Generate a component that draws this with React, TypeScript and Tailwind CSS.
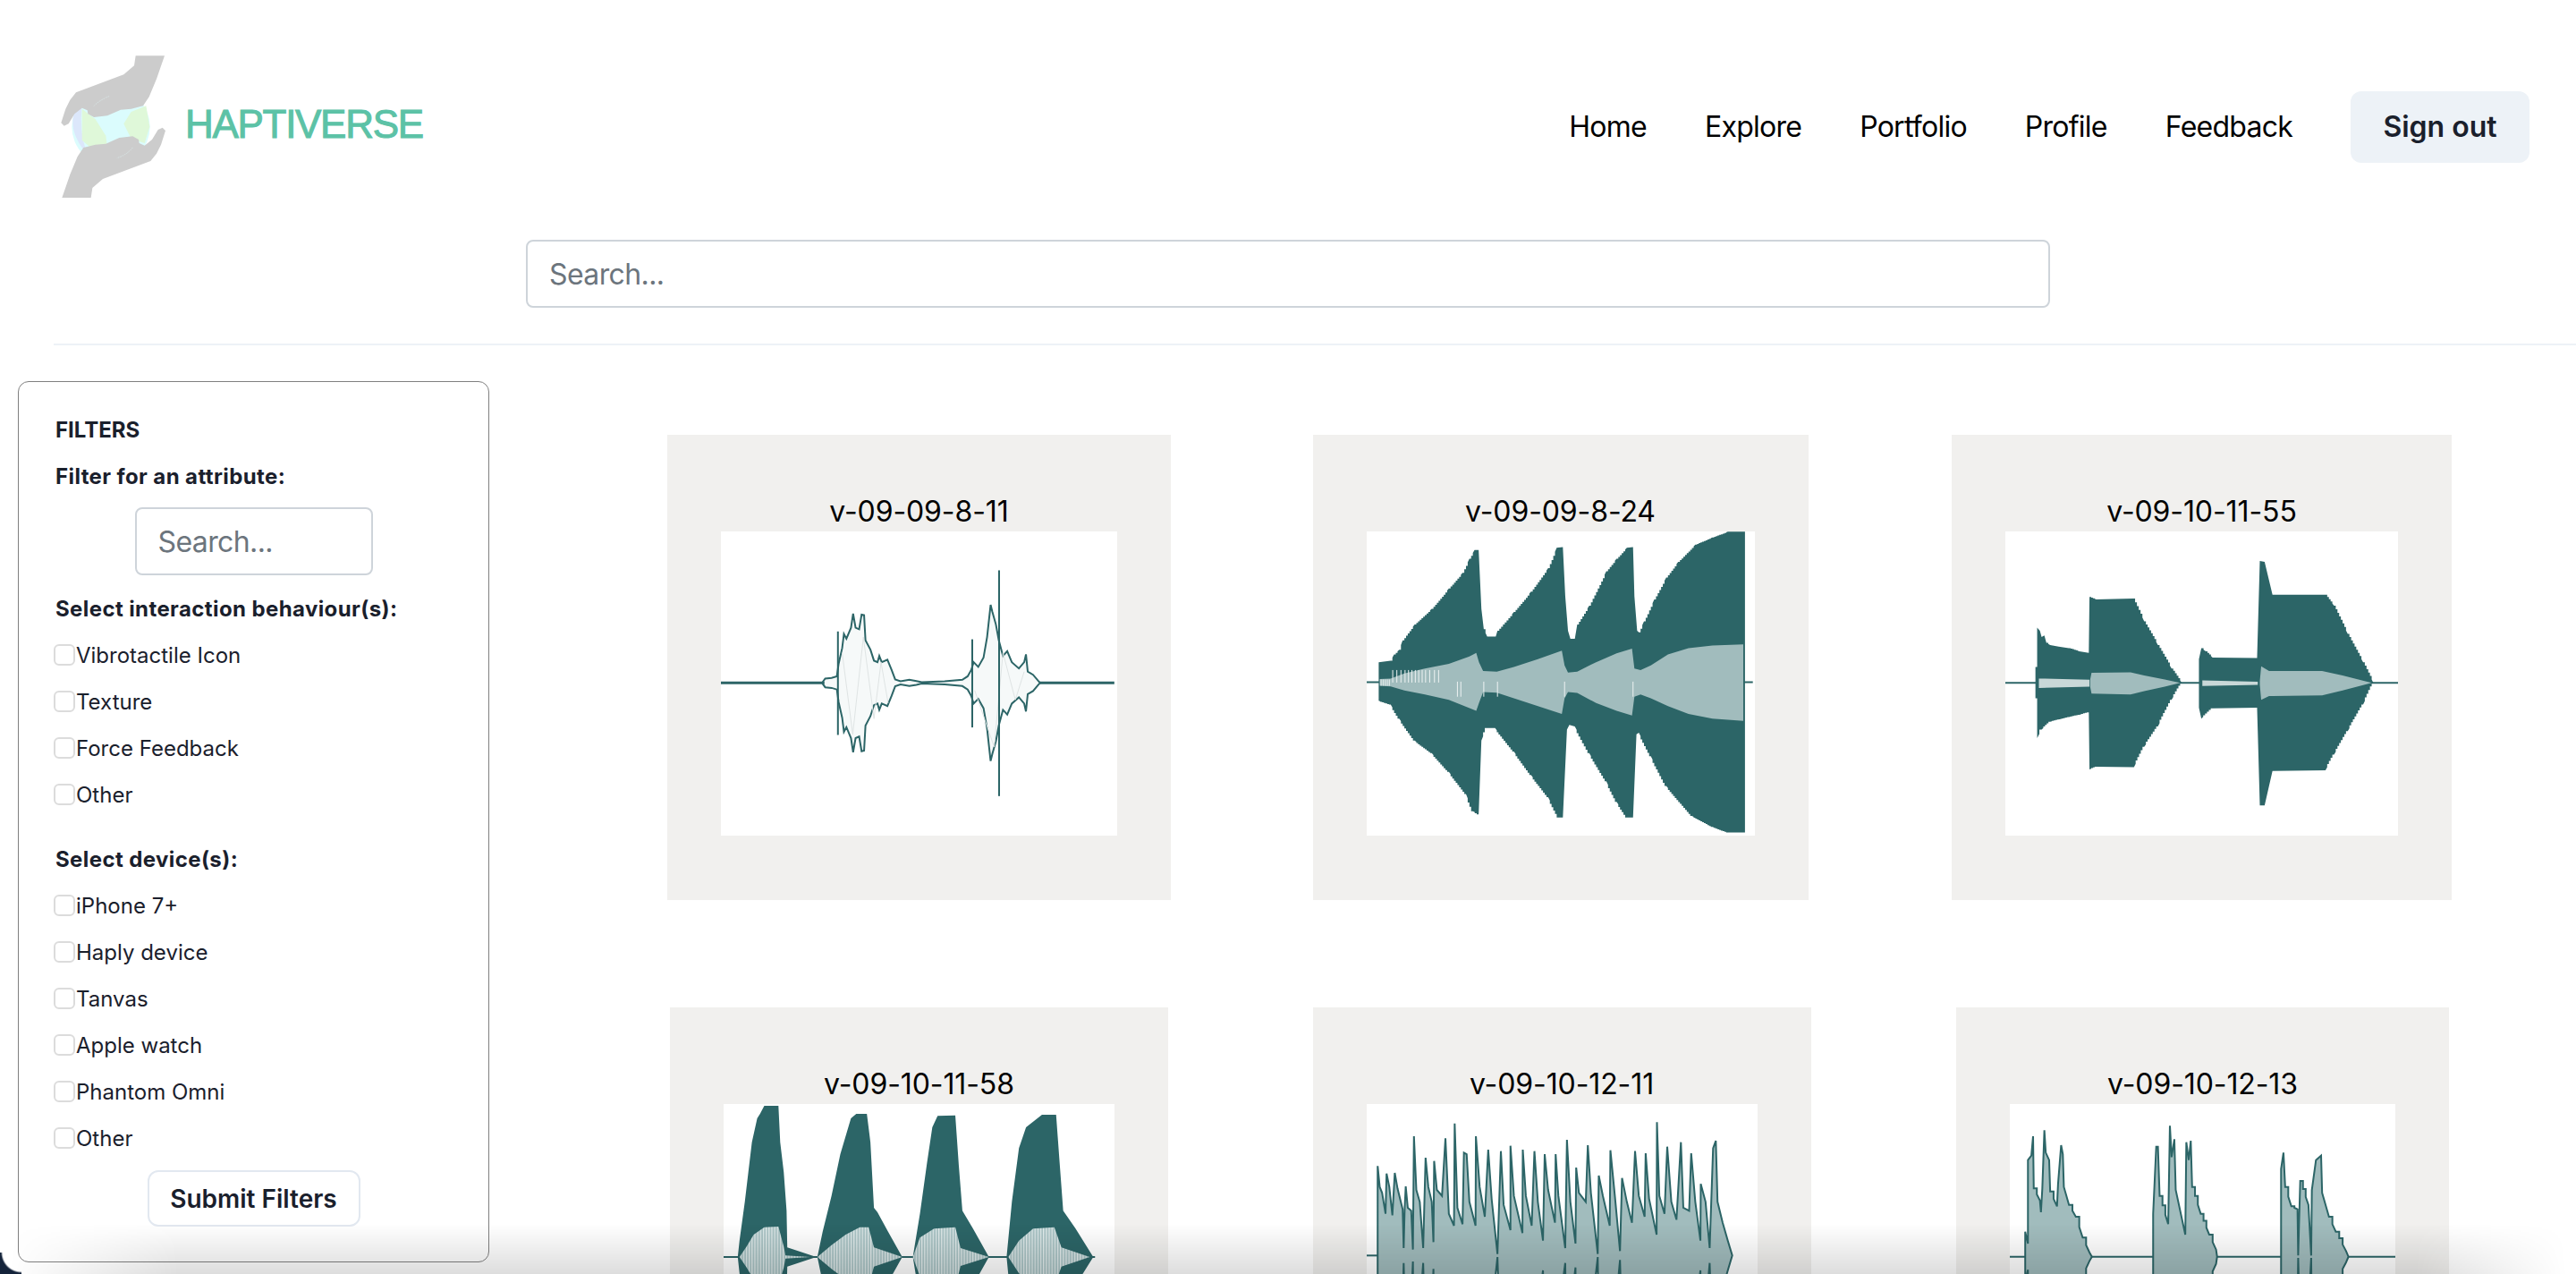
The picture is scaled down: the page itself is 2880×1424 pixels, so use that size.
import React from "react";

const DARK = "#2c6567";
const LIGHT = "#a1bcbd";

type P = [number, number];
const pts = (a: P[]) => a.map((p) => p.join(",")).join(" ");
const mirror = (top: P[], axis: number): P[] => [
  ...top,
  ...[...top].reverse().map(([x, y]) => [x, 2 * axis - y] as P),
];
const stairs = (a: P[], step = 5): P[] => {
  const out: P[] = [];
  a.forEach((p, i) => {
    const q = a[(i + 1) % a.length];
    out.push(p);
    const dx = q[0] - p[0];
    const dy = q[1] - p[1];
    const n = Math.floor(Math.abs(dx) / step);
    if (n > 1 && Math.abs(dy) > step && Math.abs(dy) / Math.abs(dx) < 4) {
      for (let k = 1; k < n; k++) {
        const x = p[0] + (dx * k) / n;
        out.push([x, p[1] + (dy * (k - 1)) / n]);
        out.push([x, p[1] + (dy * k) / n]);
      }
    }
  });
  return out;
};

const NS = { vectorEffect: "non-scaling-stroke" as const };

function Frame({ vb, w, children }: { vb: string; w: number; children: React.ReactNode }) {
  return (
    <div className="bg-white h-[340px] shrink-0 mt-[1px]" style={{ width: w }}>
      <svg viewBox={vb} preserveAspectRatio="none" className="block w-full h-full">
        {children}
      </svg>
    </div>
  );
}

function Wave1() {
  const a: P[] = [[505, 833], [512, 822], [530, 820], [545, 815], [550, 775], [560, 725], [565, 680], [572, 695], [585, 660], [591, 615], [598, 660], [608, 665], [615, 618], [622, 620], [626, 700], [640, 730], [650, 765], [660, 770], [665, 750], [672, 770], [688, 762], [700, 795], [710, 825], [725, 831], [750, 826], [770, 830], [785, 834], [850, 831], [900, 826], [915, 815], [925, 795], [932, 770], [945, 785], [960, 755], [970, 690], [980, 587], [985, 610], [995, 650], [1003, 700], [1015, 750], [1027, 735], [1040, 770], [1060, 790], [1075, 770], [1080, 745], [1085, 800], [1100, 810], [1115, 830], [1120, 836]];
  return (
    <Frame vb="217 353 1121 970" w={443}>
      <polygon points={pts(mirror(a, 836))} fill="#f6f9f9" stroke={DARK} strokeWidth={2} {...NS} />
      <polyline points="560,740 590,1000 620,690 650,950 670,770 690,900" fill="none" stroke="#dfe4e4" strokeWidth={1} {...NS} />
      <polyline points="935,860 990,1040 1015,740 1050,890 1075,800" fill="none" stroke="#dfe4e4" strokeWidth={1} {...NS} />
      <line x1="217" y1="836" x2="510" y2="836" stroke={DARK} strokeWidth={3} {...NS} />
      <line x1="1118" y1="836" x2="1330" y2="836" stroke={DARK} strokeWidth={3} {...NS} />
      <line x1="548" y1="672" x2="548" y2="1002" stroke={DARK} strokeWidth={2} {...NS} />
      <line x1="928" y1="697" x2="928" y2="978" stroke={DARK} strokeWidth={2} {...NS} />
      <line x1="1004" y1="477" x2="1004" y2="1197" stroke={DARK} strokeWidth={2} {...NS} />
    </Frame>
  );
}

function Wave2() {
  const outer: P[] = [[265, 770], [300, 765], [310, 745], [325, 730], [335, 700], [370, 650], [420, 600], [470, 535], [510, 485], [530, 440], [545, 412], [557, 412], [565, 600], [572, 665], [582, 688], [607, 688], [612, 670], [660, 610], [710, 545], [760, 470], [785, 405], [803, 403], [810, 560], [818, 670], [825, 695], [838, 695], [845, 650], [880, 590], [930, 480], [960, 440], [990, 405], [1008, 403], [1012, 560], [1020, 670], [1025, 675], [1040, 640], [1070, 570], [1105, 500], [1140, 450], [1190, 395], [1240, 372], [1285, 354], [1335, 354], [1335, 1313], [1285, 1313], [1240, 1295], [1180, 1260], [1105, 1165], [1060, 1070], [1025, 995], [1018, 1000], [1008, 1265], [990, 1265], [960, 1215], [930, 1150], [880, 1060], [838, 975], [822, 970], [815, 985], [803, 1265], [790, 1265], [760, 1200], [710, 1130], [660, 1055], [605, 980], [580, 980], [565, 1020], [557, 1255], [540, 1245], [520, 1190], [470, 1120], [420, 1060], [370, 1020], [325, 950], [300, 905], [265, 893]];
  const inner: P[] = [[268, 824], [300, 822], [340, 806], [400, 790], [470, 775], [530, 752], [550, 740], [558, 770], [570, 798], [610, 800], [660, 785], [730, 760], [800, 733], [808, 780], [818, 803], [845, 800], [900, 770], [960, 742], [1005, 727], [1012, 790], [1030, 795], [1060, 780], [1110, 745], [1170, 725], [1240, 717], [1330, 713], [1330, 957], [1240, 950], [1170, 935], [1110, 910], [1060, 885], [1030, 873], [1012, 880], [1005, 940], [960, 925], [900, 900], [845, 868], [818, 865], [808, 885], [800, 935], [730, 910], [660, 885], [610, 867], [570, 865], [558, 900], [550, 925], [470, 890], [400, 873], [340, 860], [300, 847], [268, 845]];
  const ticks = [272, 278, 284, 290, 296, 306, 318, 330, 342, 352, 362, 372, 382, 392, 402, 414, 428, 440, 495, 505, 572, 612, 808, 1008];
  return (
    <Frame vb="230 353 1134 970" w={434}>
      <line x1="230" y1="834" x2="1358" y2="834" stroke={DARK} strokeWidth={2} {...NS} />
      <polygon points={pts(stairs(outer))} fill={DARK} />
      <polygon points={pts(inner)} fill={LIGHT} />
      {ticks.map((x) => (
        <line key={x} x1={x} x2={x} y1={x < 300 ? 825 : x < 445 ? 795 : 832} y2={x < 300 ? 845 : x < 445 ? 835 : 880} stroke="#eef3f3" strokeWidth={1} {...NS} />
      ))}
    </Frame>
  );
}

function Wave3() {
  const a: P[] = [[302, 785], [307, 785], [307, 660], [315, 670], [320, 690], [328, 685], [334, 708], [345, 715], [370, 720], [400, 725], [430, 735], [458, 740], [460, 562], [480, 570], [588, 567], [620, 640], [660, 715], [700, 790], [730, 836], [700, 890], [660, 975], [620, 1040], [590, 1105], [480, 1103], [460, 1112], [458, 930], [430, 938], [400, 945], [345, 960], [320, 985], [307, 1012], [307, 885], [302, 885]];
  const b: P[] = [[780, 836], [780, 760], [787, 725], [800, 735], [820, 755], [950, 757], [952, 680], [958, 447], [972, 450], [995, 555], [1150, 555], [1175, 590], [1215, 680], [1260, 770], [1290, 836], [1260, 905], [1215, 990], [1175, 1065], [1150, 1115], [995, 1117], [972, 1227], [958, 1227], [952, 990], [950, 915], [820, 917], [787, 950], [780, 915]];
  const c: P[] = [[466, 804], [580, 802], [620, 812], [680, 825], [725, 836], [680, 848], [620, 862], [580, 873], [466, 870], [462, 848], [462, 826]];
  const d: P[] = [[962, 783], [985, 798], [1140, 798], [1200, 812], [1285, 836], [1200, 860], [1140, 876], [985, 878], [962, 890], [958, 842], [958, 830]];
  return (
    <Frame vb="214 353 1148 970" w={439}>
      <line x1="214" y1="836" x2="1362" y2="836" stroke={DARK} strokeWidth={2} {...NS} />
      <polygon points={pts(stairs(a))} fill={DARK} />
      <polygon points={pts(stairs(b))} fill={DARK} />
      <polygon points={pts(c)} fill={LIGHT} />
      <polygon points={pts(d)} fill={LIGHT} />
      <polygon points="312,822 460,826 460,848 312,852" fill="#c9d8d8" />
      <polygon points="790,828 952,832 952,842 790,846" fill="#c9d8d8" />
    </Frame>
  );
}

function Wave4() {
  const peaks: P[][] = [
    [[265, 885], [270, 830], [285, 700], [295, 600], [305, 500], [320, 420], [328, 405], [340, 378], [380, 378], [385, 500], [395, 600], [403, 730], [405, 853], [487, 885]],
    [[490, 885], [505, 800], [530, 680], [555, 540], [585, 420], [600, 405], [630, 405], [640, 500], [650, 720], [660, 735], [690, 800], [730, 885]],
    [[760, 885], [780, 740], [800, 570], [815, 450], [830, 412], [880, 410], [890, 580], [900, 730], [930, 790], [975, 885]],
    [[1025, 885], [1040, 700], [1060, 520], [1080, 450], [1125, 408], [1165, 408], [1175, 570], [1185, 730], [1220, 790], [1270, 885]],
  ];
  const lights: P[][] = [
    [[270, 885], [290, 850], [310, 810], [340, 785], [380, 783], [395, 850], [400, 880], [470, 885]],
    [[490, 885], [530, 845], [570, 810], [610, 785], [635, 785], [650, 853], [730, 885]],
    [[760, 885], [780, 820], [820, 790], [880, 785], [895, 855], [975, 885]],
    [[1030, 885], [1060, 830], [1100, 790], [1160, 785], [1180, 853], [1260, 885]],
  ];
  return (
    <Frame vb="225 372 1105 1020" w={437}>
      <defs>
        <pattern id="stripes" width="8" height="10" patternUnits="userSpaceOnUse">
          <rect width="8" height="10" fill="#a9c3c4" />
          <rect width="3" height="10" fill="#e3ecec" />
        </pattern>
      </defs>
      <line x1="225" y1="885" x2="1275" y2="885" stroke={DARK} strokeWidth={2} {...NS} />
      {peaks.map((p, i) => <polygon key={i} points={pts(mirror(p, 885))} fill={DARK} />)}
      {lights.map((p, i) => <polygon key={i} points={pts(mirror(p, 885))} fill="url(#stripes)" />)}
    </Frame>
  );
}

function Wave5() {
  const a: P[] = [[262, 880], [262, 580], [268, 650], [275, 670], [285, 740], [288, 605], [296, 650], [305, 745], [312, 603], [320, 655], [335, 725], [338, 855], [341, 720], [344, 648], [350, 720], [360, 730], [365, 860], [368, 480], [375, 660], [385, 700], [395, 855], [402, 552], [410, 650], [420, 700], [425, 835], [427, 563], [435, 660], [450, 680], [460, 487], [470, 740], [485, 780], [487, 437], [495, 720], [510, 775], [514, 535], [522, 540], [530, 700], [548, 780], [549, 480], [560, 650], [575, 750], [585, 525], [595, 690], [612, 875], [622, 530], [630, 710], [650, 795], [650, 512], [660, 680], [685, 805], [686, 525], [695, 680], [712, 780], [720, 530], [730, 700], [745, 830], [750, 540], [760, 660], [780, 770], [782, 540], [790, 680], [810, 855], [815, 492], [825, 700], [840, 840], [842, 585], [850, 670], [870, 700], [876, 510], [885, 670], [905, 875], [908, 612], [920, 680], [940, 780], [942, 527], [955, 680], [970, 865], [976, 620], [990, 700], [1005, 770], [1014, 530], [1025, 680], [1042, 750], [1045, 537], [1055, 690], [1077, 810], [1078, 433], [1085, 680], [1100, 740], [1108, 515], [1120, 700], [1135, 760], [1148, 500], [1155, 720], [1172, 730], [1178, 537], [1190, 700], [1205, 830], [1206, 640], [1220, 700], [1232, 855], [1242, 520], [1250, 495], [1255, 700], [1270, 770], [1285, 830], [1298, 880]];
  return (
    <Frame vb="230 372 1142 1020" w={437}>
      <line x1="230" y1="880" x2="262" y2="880" stroke={DARK} strokeWidth={2} {...NS} />
      <polygon points={pts(mirror(a, 880))} fill={LIGHT} stroke={DARK} strokeWidth={2} {...NS} />
    </Frame>
  );
}

function Wave6() {
  const bursts: P[][] = [
    [[272, 884], [272, 800], [280, 840], [280, 560], [290, 545], [295, 480], [297, 655], [315, 695], [318, 735], [322, 655], [328, 460], [332, 535], [342, 560], [345, 665], [365, 715], [368, 640], [377, 510], [382, 540], [385, 650], [400, 710], [420, 750], [440, 820], [460, 870], [467, 884]],
    [[646, 884], [646, 740], [655, 515], [660, 515], [665, 680], [690, 775], [695, 445], [700, 550], [708, 490], [712, 660], [740, 810], [743, 500], [750, 560], [756, 495], [760, 650], [785, 740], [810, 810], [830, 860], [833, 884]],
    [[1020, 884], [1020, 590], [1027, 535], [1032, 650], [1050, 715], [1068, 725], [1070, 880], [1076, 630], [1100, 710], [1108, 880], [1110, 660], [1122, 560], [1137, 545], [1140, 670], [1160, 750], [1180, 800], [1210, 865], [1217, 884]],
  ];
  return (
    <Frame vb="227 372 1127 1020" w={431}>
      <line x1="227" y1="884" x2="1354" y2="884" stroke={DARK} strokeWidth={2} {...NS} />
      {bursts.map((p, i) => (
        <polygon key={i} points={pts(mirror(stairs(p, 8), 884))} fill={LIGHT} stroke={DARK} strokeWidth={2} {...NS} />
      ))}
    </Frame>
  );
}

function Logo() {
  const hand = "M305 37 L402 37 L375 115 L350 175 L330 205 L290 215 L255 218 L210 238 L165 243 L145 232 L143 220 L125 212 L100 232 L80 265 L65 272 L55 262 L70 215 L85 185 L105 160 L265 100 L300 70 Z";
  return (
    <svg viewBox="0 0 450 540" className="block w-[150px] h-[180px] -mt-[12px] -mb-[8px] -ml-[10px] shrink-0">
      <defs>
        <filter id="soft"><feGaussianBlur stdDeviation="2" /></filter>
      </defs>
      <g filter="url(#soft)">
        <circle cx="222" cy="275" r="131" fill="#dbfcfd" />
        <path d="M100 225 Q80 280 125 345 L140 360 Q115 290 125 205 Z" fill="#dce7fb" />
        <path d="M125 215 L170 250 L205 305 L210 345 L160 350 L125 320 Z" fill="#dff8d9" />
        <path d="M290 225 L340 205 L352 275 L335 330 L290 315 L265 265 Z" fill="#dff8d9" />
        <path d={hand} fill="#cccccc" />
        <path d={hand} fill="#cccccc" transform="rotate(180 230 275)" />
      </g>
      <path d="M165 205 Q185 185 218 172" fill="none" stroke="#dcefef" strokeWidth="2" strokeDasharray="5 3" />
      <path d="M295 345 Q275 370 242 380" fill="none" stroke="#dcefef" strokeWidth="2" strokeDasharray="5 3" />
    </svg>
  );
}

function Check({ label }: { label: string }) {
  return (
    <label className="flex items-center h-[52px] -ml-[2px] text-[24px] leading-[36px] text-[#1a202c]">
      <span className="block w-[24px] h-[24px] -mt-[3px] rounded-[6px] border-2 border-[#dcdcdc] bg-white shrink-0 mr-[1px]" />
      {label}
    </label>
  );
}

function Card({ title, width, shift, children }: { title: string; width: number; shift?: string; children: React.ReactNode }) {
  return (
    <div className={`bg-[#f1f0ee] h-[520px] pt-[65px] flex flex-col items-center ${shift ?? ""}`} style={{ width }}>
      <div className="text-[32px] leading-[42px] tracking-[-0.1px] text-black whitespace-nowrap">{title}</div>
      {children}
    </div>
  );
}

const SEARCH = "flex items-center h-[76px] border-2 border-[#ced4da] rounded-[8px] px-[24px] pt-[2px] text-[32px] tracking-[-0.6px] text-[#6c757d]";
const HEAD = "font-bold leading-[36px] tracking-[0.4px]";

export default function App() {
  return (
    <div className="relative w-[2880px] h-[1424px] overflow-hidden bg-white font-['Inter',sans-serif]">
      <header className="flex items-center justify-between pl-[60px] pr-[52px] pt-[62px]">
        <div className="flex items-center h-[160px]">
          <Logo />
          <span className="font-['Liberation_Sans',sans-serif] text-[44px] leading-none text-[#5cc2a6] [-webkit-text-stroke:1px_#5cc2a6] tracking-[-1.3px] ml-[7px] mb-[6px]">HAPTIVERSE</span>
        </div>
        <nav className="flex items-center gap-[65px] text-[32px] text-black">
          <a className="tracking-[-0.75px]">Home</a>
          <a className="tracking-[-0.75px]">Explore</a>
          <a className="tracking-[-0.75px]">Portfolio</a>
          <a className="tracking-[-0.75px]">Profile</a>
          <a className="tracking-[-0.75px]">Feedback</a>
          <button className="h-[80px] w-[200px] rounded-[12px] bg-[#edf2f7] font-semibold text-[#1a202c]">Sign out</button>
        </nav>
      </header>

      <div className={`mt-[46px] mx-auto w-[1704px] ${SEARCH}`}>Search...</div>
      <div className="mt-[40px] ml-[60px] h-[2px] bg-[#edf2f7]" />

      <div className="mt-[40px] flex items-start">
        <aside className="ml-[20px] w-[527px] h-[985px] shrink-0 border border-[#808080] rounded-[12px] pt-[36px] px-[41px] text-[24px] text-[#1a202c]">
          <div className="font-bold leading-[36px]">FILTERS</div>
          <div className={`${HEAD} mt-[16px]`}>Filter for an attribute:</div>
          <div className={`mx-auto mt-[16px] w-[266px] ${SEARCH}`}>Search...</div>
          <div className={`${HEAD} mt-[20px]`}>Select interaction behaviour(s):</div>
          <div className="mt-[8px]">
            {["Vibrotactile Icon", "Texture", "Force Feedback", "Other"].map((l) => <Check key={l} label={l} />)}
          </div>
          <div className={`${HEAD} mt-[28px]`}>Select device(s):</div>
          <div className="mt-[8px]">
            {["iPhone 7+", "Haply device", "Tanvas", "Apple watch", "Phantom Omni", "Other"].map((l) => <Check key={l} label={l} />)}
          </div>
          <button className="block mx-auto mt-[9px] w-[238px] h-[63px] border-2 border-[#e2e8f0] rounded-[12px] text-[28px] font-semibold">Submit Filters</button>
        </aside>

        <main className="ml-[122px] w-[2151px] pt-[60px] grid grid-cols-3 gap-y-[120px] justify-items-center">
          <Card title="v-09-09-8-11" width={563}><Wave1 /></Card>
          <Card title="v-09-09-8-24" width={554}><Wave2 /></Card>
          <Card title="v-09-10-11-55" width={559}><Wave3 /></Card>
          <Card title="v-09-10-11-58" width={557}><Wave4 /></Card>
          <Card title="v-09-10-12-11" width={557} shift="ml-[3px]"><Wave5 /></Card>
          <Card title="v-09-10-12-13" width={551} shift="ml-[2px]"><Wave6 /></Card>
        </main>
      </div>

      <div className="absolute bottom-0 left-0 right-0 h-[56px] bg-gradient-to-b from-transparent to-[#00000022] pointer-events-none [mask-image:linear-gradient(to_right,transparent_10px,black_200px,black_2700px,transparent_2870px)]" />
      <div className="absolute bottom-0 left-0 w-[24px] h-[24px] bg-[radial-gradient(circle_at_100%_0,transparent_21px,#14233a_23px)]" />
    </div>
  );
}
